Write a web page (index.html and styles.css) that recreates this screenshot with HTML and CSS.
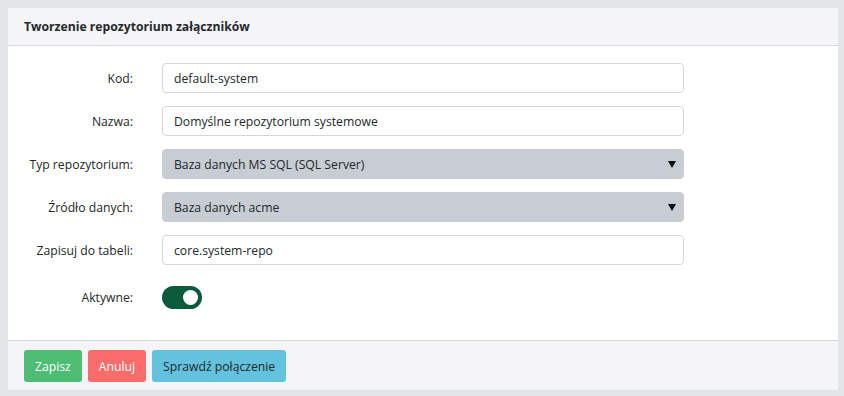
FILE: index.html
```html
<!DOCTYPE html>
<html lang="pl">
<head>
<meta charset="utf-8">
<link rel="stylesheet" href="styles.css">
</head>
<body>
<div class="card">
  <div class="card-header">Tworzenie repozytorium załączników</div>
  <div class="card-body">
    <div class="row">
      <label class="lbl">Kod:</label>
      <div class="field input">default-system</div>
    </div>
    <div class="row">
      <label class="lbl">Nazwa:</label>
      <div class="field input">Domyślne repozytorium systemowe</div>
    </div>
    <div class="row">
      <label class="lbl">Typ repozytorium:</label>
      <div class="field select"><span>Baza danych MS SQL (SQL Server)</span><span class="caret"></span></div>
    </div>
    <div class="row">
      <label class="lbl">Źródło danych:</label>
      <div class="field select"><span>Baza danych acme</span><span class="caret"></span></div>
    </div>
    <div class="row">
      <label class="lbl">Zapisuj do tabeli:</label>
      <div class="field input">core.system-repo</div>
    </div>
    <div class="row row-switch">
      <label class="lbl">Aktywne:</label>
      <div class="switch"><span class="knob"></span></div>
    </div>
  </div>
  <div class="card-footer">
    <button class="btn btn-success">Zapisz</button>
    <button class="btn btn-danger">Anuluj</button>
    <button class="btn btn-info">Sprawdź połączenie</button>
  </div>
</div>
</body>
</html>
```

FILE: styles.css
```css
html, body {
  margin: 0;
  padding: 0;
}
body {
  background: #e4e5e6;
  padding: 8px 6px 7px 8px;
  font-family: "Open Sans", "Noto Sans", sans-serif;
  font-size: 12.2px;
  color: #23282c;
}
.card {
  background: #fff;
  border-radius: 3px;
  overflow: hidden;
}
.card-header {
  background: #f5f5f7;
  border-bottom: 1px solid #d6d8db;
  height: 38px;
  box-sizing: border-box;
  padding: 0 16px;
  display: flex;
  align-items: center;
  font-weight: 700;
  font-size: 12.2px;
}
.card-body {
  padding: 17px 0 31px 0;
  display: flex;
  flex-direction: column;
  gap: 13px;
}
.row {
  display: grid;
  grid-template-columns: 125px 522px;
  column-gap: 29px;
  align-items: center;
}
.row-switch {
  margin-top: 8px;
}
.lbl {
  text-align: right;
  color: #23282c;
}
.field {
  height: 30px;
  box-sizing: border-box;
  border-radius: 4px;
  padding: 0 11px;
  display: flex;
  align-items: center;
  justify-content: space-between;
}
.input {
  border: 1px solid #d3d6da;
  background: #fff;
}
.select {
  background: #c8ccd3;
  border: 1px solid #c8ccd3;
}
.caret {
  width: 0;
  height: 0;
  border-left: 4.5px solid transparent;
  border-right: 4.5px solid transparent;
  border-top: 7px solid #111;
  margin-right: -4px;
}
.switch {
  width: 40px;
  height: 23px;
  border-radius: 12px;
  background: #0b5a3a;
  display: flex;
  align-items: center;
  justify-content: flex-end;
  padding: 0 4px;
  box-sizing: border-box;
}
.knob {
  width: 15px;
  height: 15px;
  border-radius: 50%;
  background: #fff;
}
.card-footer {
  background: #f5f5f7;
  border-top: 1px solid #d6d8db;
  padding: 9px 16px 8px 16px;
  display: flex;
  gap: 6px;
}
.btn {
  font-family: inherit;
  font-size: 12.2px;
  height: 32px;
  border: none;
  border-radius: 3px;
  padding: 0 11px;
  cursor: pointer;
}
.btn-success {
  background: #4dbd74;
  color: #fff;
}
.btn-danger {
  background: #f86c6b;
  color: #fff;
}
.btn-info {
  background: #63c2de;
  color: #23282c;
}
```
